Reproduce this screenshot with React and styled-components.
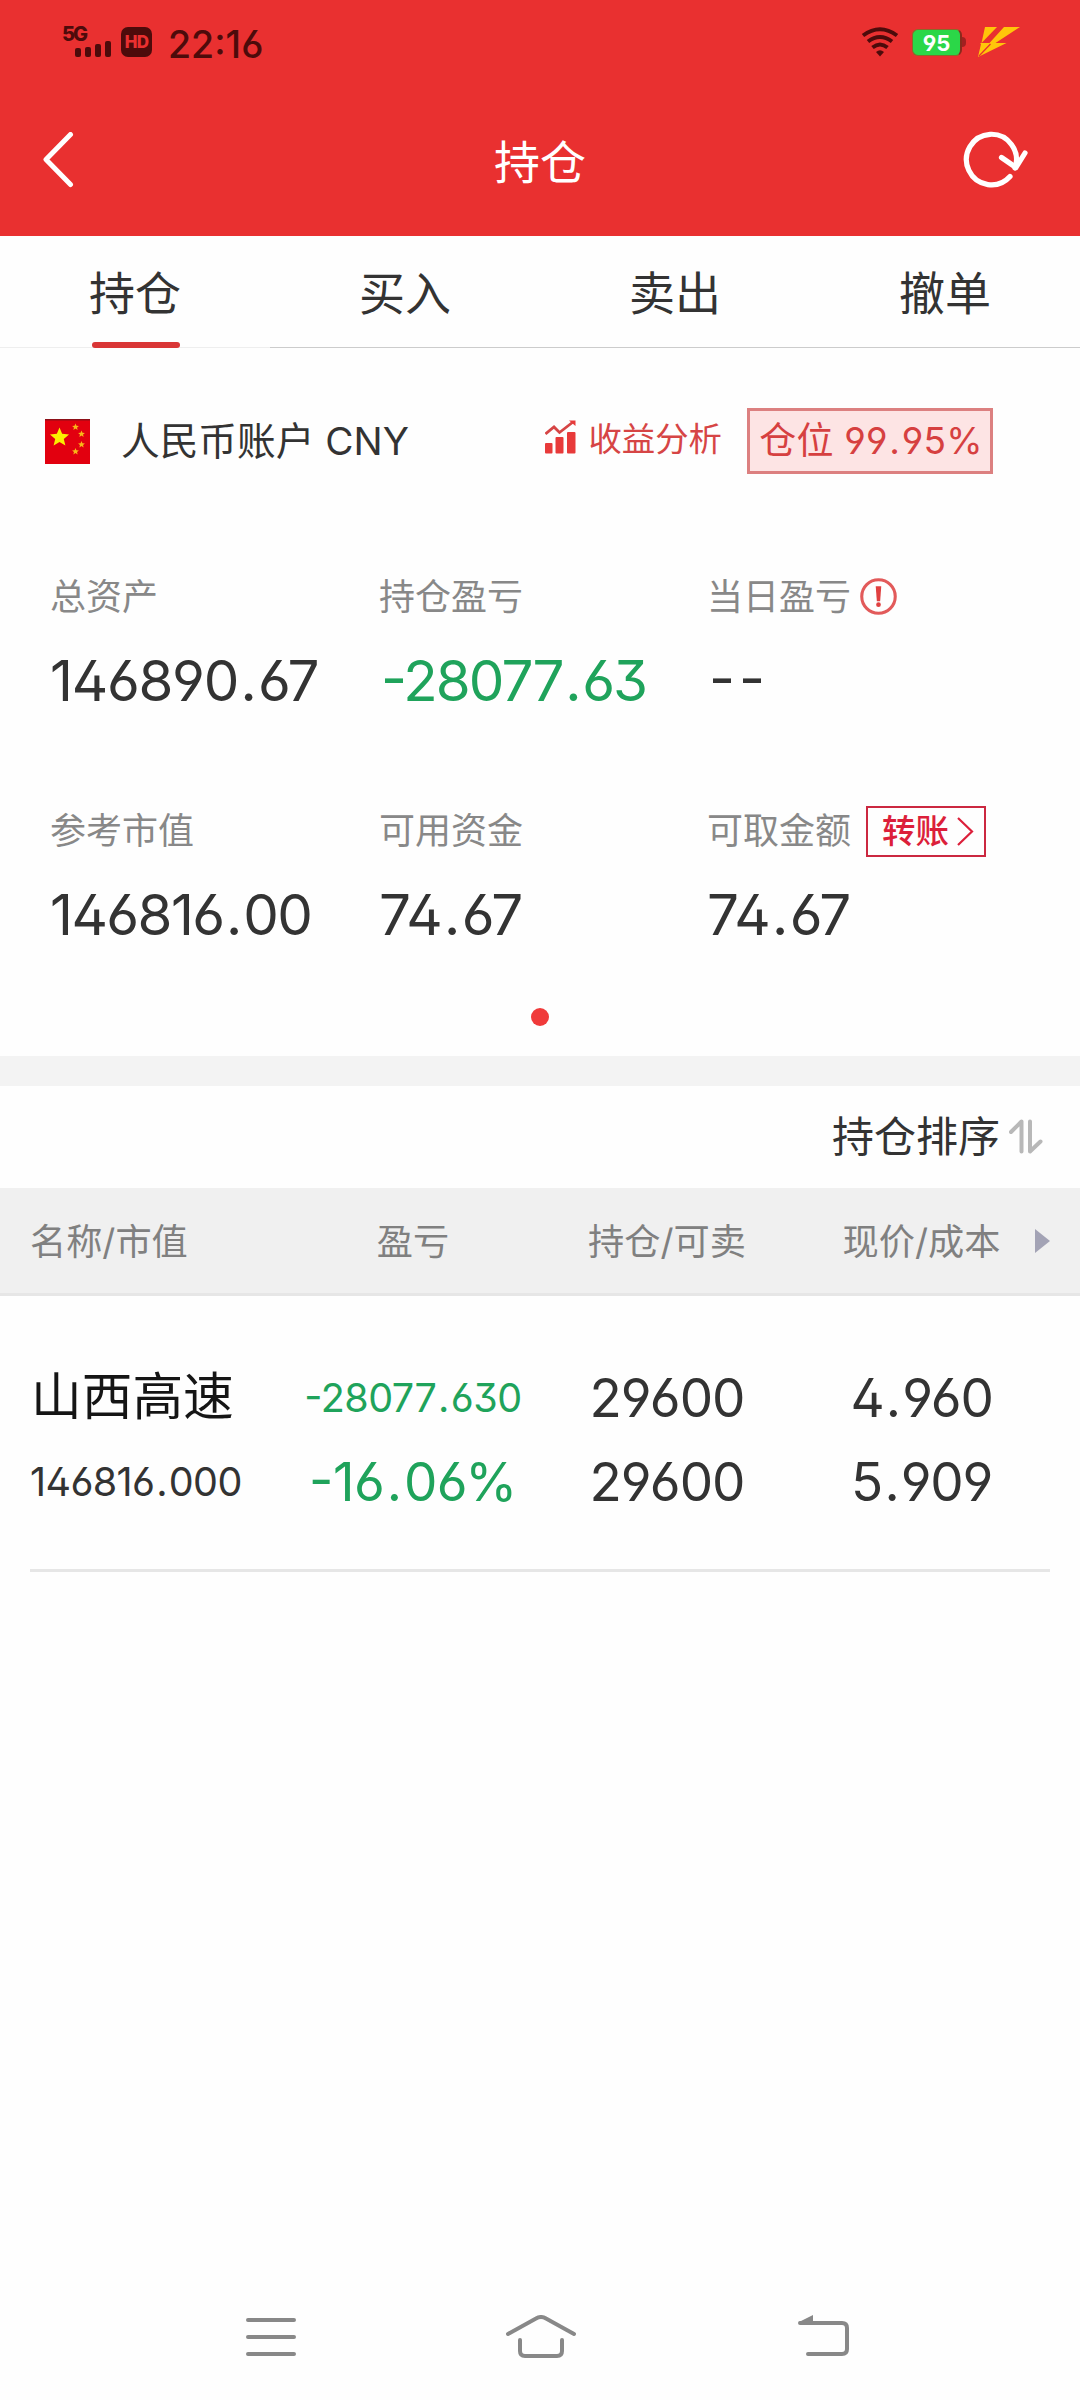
import React from "react";
import styled, { createGlobalStyle } from "styled-components";

const Global = createGlobalStyle`
  * { box-sizing: border-box; }
  body { margin: 0; background: #fefefe; }
`;

const Screen = styled.div`
  width: 1080px;
  height: 2400px;
  display: flex;
  flex-direction: column;
  background: #fefefe;
  color: #333;
  font-family: Inter, "Noto Sans CJK SC", sans-serif;
  font-feature-settings: "case", "ss01";
  white-space: nowrap;
  overflow: hidden;
`;

const TopArea = styled.header`
  height: 236px;
  background: #e93030;
  color: #fff;
`;

const StatusBar = styled.div`
  height: 84px;
  display: flex;
  align-items: center;
  justify-content: space-between;
  padding: 0 60px 0 62px;
  color: #4d0b0b;
`;

const StatusGroup = styled.div`
  display: flex;
  align-items: center;
`;

const Signal = styled.div`
  width: 49px;
  height: 34px;
  display: flex;
  flex-direction: column;
`;

const Network = styled.span`
  height: 15px;
  font-size: 20px;
  line-height: 18px;
  font-weight: 800;
  letter-spacing: -2px;
`;

const Bars = styled.div`
  height: 17px;
  display: flex;
  align-items: flex-end;
  gap: 4px;
  padding-left: 13px;
`;

const Bar = styled.i`
  width: 6px;
  height: ${(p) => p.$h}px;
  border-radius: 2px;
  background: currentColor;
`;

const HdBadge = styled.span`
  width: 31px;
  height: 30px;
  margin-left: 10px;
  border-radius: 7px;
  background: #4d0b0b;
  color: #e93030;
  font-size: 17px;
  line-height: 30px;
  font-weight: 800;
  letter-spacing: -0.8px;
  text-align: center;
`;

const Clock = styled.span`
  margin: 5px 0 0 16px;
  font-size: 37.5px;
  line-height: 40px;
  font-weight: 450;
`;

const Battery = styled.span`
  width: 50px;
  height: 27px;
  margin-left: 13px;
  border: 1px solid #8a6a2a;
  border-right: 2px solid #8a2a1c;
  border-radius: 6px;
  background: #2bd748;
  color: #fff;
  font-size: 22px;
  line-height: 26px;
  font-weight: 700;
  text-align: center;
`;

const BatteryTip = styled.i`
  width: 4px;
  height: 10px;
  margin-right: 12px;
  border-radius: 0 4px 4px 0;
  background: #a22020;
`;

const TitleBar = styled.div`
  height: 152px;
  display: flex;
  align-items: center;
  justify-content: space-between;
  padding: 0 52px 0 42px;
`;

const Title = styled.h1`
  margin: 3px 0 0 44px;
  font-size: 46px;
  line-height: 60px;
  font-weight: 400;
`;

const Tabs = styled.nav`
  height: 112px;
  display: grid;
  grid-template-columns: repeat(4, 1fr);
`;

const Tab = styled.div`
  display: flex;
  flex-direction: column;
  align-items: center;
  justify-content: space-between;
  padding-top: 27px;
  border-bottom: 1px solid ${(p) => (p.$active ? "#eee" : "#ccc")};
  font-size: 46px;
  line-height: 60px;
`;

const TabMark = styled.i`
  width: 88px;
  height: 6px;
  margin: 0 0 -1px 1px;
  border-radius: 3px;
  background: #d93636;
`;

const AccountRow = styled.section`
  height: 186px;
  display: flex;
  align-items: center;
  padding: 0 87px 0 45px;
`;

const AccountName = styled.span`
  margin-left: 31px;
  font-size: 38.7px;
  line-height: 50px;
`;

const Analysis = styled.span`
  height: 46px;
  display: flex;
  align-items: flex-start;
  gap: 12px;
  margin-left: auto;
  padding-top: 2px;
  color: #d64545;
  font-size: 33.4px;
  line-height: 39px;
`;

const Ratio = styled.span`
  width: 246px;
  height: 66px;
  margin-left: 25px;
  padding-left: 2px;
  border: 3px solid #dc8080;
  background: #fde4e4;
  color: #d64040;
  font-size: 37px;
  line-height: 59px;
  text-align: center;
  letter-spacing: 0.2px;
`;

const Summary = styled.section`
  height: 522px;
  display: grid;
  grid-template-columns: 329px 328px 1fr;
  grid-template-rows: 234px 234px;
  padding: 36px 0 0 50px;
`;

const Metric = styled.div`
  display: flex;
  flex-direction: column;
`;

const MetricLabel = styled.div`
  height: 52px;
  display: flex;
  align-items: center;
  color: #888;
  font-size: 36px;
`;

const LabelText = styled.span`
  margin-top: -4px;
`;

const MetricValue = styled.div`
  height: 70px;
  margin-top: 24px;
  margin-left: ${(p) => p.$shift || 0}px;
  color: ${(p) => (p.$loss ? "#1fa35b" : "#333")};
  font-size: 56.5px;
  line-height: 70px;
  font-weight: 385;
  letter-spacing: ${(p) => p.$track}px;
`;

const Point = styled.span`
  margin: 0 0.045em;
`;

const TransferButton = styled.span`
  width: 120px;
  height: 51px;
  display: flex;
  align-items: center;
  gap: 9px;
  margin: 2px 0 0 15px;
  padding-left: 14px;
  border: 2px solid #cb2840;
  color: #dc1f3a;
  font-size: 33.5px;
  line-height: 44px;
  font-weight: 500;

  svg {
    margin-left: -1px;
  }
`;

const Pager = styled.div`
  width: 18px;
  height: 18px;
  margin: -48px auto 30px;
  border-radius: 50%;
  background: #f03a3a;
`;

const Divider = styled.div`
  height: 30px;
  background: #f3f3f3;
`;

const SortRow = styled.div`
  height: 102px;
  display: flex;
  align-items: center;
  justify-content: flex-end;
  gap: 9px;
  padding: 0 37px 7px 0;
  font-size: 42px;

  svg {
    margin-top: 6px;
  }
`;

const Columns = styled.div`
  display: grid;
  grid-template-columns: 285px 256px 252px 257px 1fr;
`;

const HeadRow = styled(Columns)`
  height: 108px;
  align-items: center;
  border-bottom: 3px solid #e6e6e6;
  background: #f0f0f0;
  color: #808080;
  font-size: 36.2px;
  text-align: center;

  svg {
    margin-left: -15px;
  }
`;

const HeadCell = styled.span`
  margin-top: -3px;
  padding-left: ${(p) => p.$pad || 0}px;
  text-align: ${(p) => p.$align || "center"};
`;

const Position = styled(Columns)`
  height: 276px;
  align-content: start;
  grid-template-rows: 84px 84px;
  align-items: center;
  padding-top: 60px;
`;

const Cell = styled.span`
  padding-left: ${(p) => p.$pad || 0}px;
  color: ${(p) => p.$color || "#333"};
  font-size: ${(p) => p.$size}px;
  line-height: 84px;
  font-weight: ${(p) => p.$weight || 385};
  letter-spacing: ${(p) => p.$track || 0}px;
  text-align: ${(p) => p.$align || "center"};
`;

const StockName = styled(Cell)`
  margin-top: -2px;
`;

const RowLine = styled.div`
  height: 3px;
  margin: -3px 30px 0;
  background: #e6e6e6;
`;

const SystemNav = styled.footer`
  height: 126px;
  display: grid;
  grid-template-columns: 1fr 72px 1fr;
  align-items: center;
  margin-top: auto;
  padding: 0 229px 0 244px;

  svg:first-child {
    justify-self: start;
  }
  svg:nth-child(2) {
    margin-left: -7px;
  }
  svg:last-child {
    justify-self: end;
  }
`;

const WifiIcon = () => (
  <svg width="38" height="30" viewBox="0 0 38 30" fill="none" stroke="#4d0b0b" strokeWidth="4">
    <path d="M2 8.500Q19 -4 36 8.500" />
    <path d="M7 14.500Q19 5.500 31 14.500" />
    <path d="M11.500 20.500Q19 14.500 26.500 20.500" />
    <path d="M15 25Q19 21.500 23 25L19 29.500Z" fill="#4d0b0b" stroke="none" />
  </svg>
);

const BoltIcon = () => (
  <svg width="42" height="30" viewBox="0 0 42 30">
    <path d="M7 0H19L3.500 16Z" fill="#ffc60a" />
    <path d="M26 0H42L17.500 16H28.500L0 30L12 17H2.500V16H11.500Z" fill="#ffc60a" />
    <path d="M3 17H12L0 30Z" fill="#ffc60a" />
    <path d="M12.500 17L1 29" stroke="#e93030" strokeWidth="1.200" />
  </svg>
);

const BackIcon = () => (
  <svg width="32" height="56" viewBox="0 0 32 56" fill="none" stroke="#fff" strokeWidth="5" strokeLinecap="round" strokeLinejoin="round">
    <path d="M28.500 2.500L4 27.500L28.500 52.500" />
  </svg>
);

const RefreshIcon = () => (
  <svg width="66" height="58" viewBox="0 0 66 58" fill="none" stroke="#fff" strokeWidth="5.200" strokeLinecap="round" strokeLinejoin="round">
    <path d="M48 45.500A25 25.300 0 1 1 53 37" />
    <path d="M39.500 26.500L54 36.500L63 22" />
  </svg>
);

const starPoints = (cx, cy, r) =>
  Array.from({ length: 10 }, (_, i) => {
    const a = -Math.PI / 2 + (i * Math.PI) / 5;
    const d = i % 2 ? r * 0.45 : r;
    return `${cx + d * Math.cos(a)},${cy + d * Math.sin(a)}`;
  }).join(" ");

const FlagIcon = () => (
  <svg width="45" height="45" viewBox="0 0 45 45">
    <rect width="45" height="45" fill="#e2000f" />
    <rect width="45" height="1.500" fill="#8d1018" />
    <polygon points={starPoints(14.5, 18.5, 10)} fill="#fbf000" />
    <polygon points={starPoints(30.5, 8, 3.6)} fill="#f8b818" />
    <polygon points={starPoints(36.5, 15, 3.6)} fill="#f8b818" />
    <polygon points={starPoints(36.5, 25.5, 3.6)} fill="#f8b818" />
    <polygon points={starPoints(30.5, 32.5, 3.6)} fill="#f8b818" />
  </svg>
);

const TrendIcon = () => (
  <svg width="31" height="34" viewBox="0 0 31 34" fill="#e83a3a">
    <rect x="0" y="23" width="7.500" height="10.500" rx="1" />
    <rect x="10.500" y="17" width="8" height="16.500" rx="1" />
    <rect x="22" y="12" width="8.500" height="21.500" rx="1" />
    <path d="M0.500 14L9 7L14.500 12.500L28 2" fill="none" stroke="#d64545" strokeWidth="2.800" />
    <path d="M24 0.500H30.500V6Z" />
  </svg>
);

const AlertBox = styled.span`
  display: flex;
  margin-left: 9px;
`;

const AlertMark = () => (
  <AlertBox>
    <svg width="37" height="37" viewBox="0 0 36 36">
      <circle cx="18" cy="18" r="16.300" fill="none" stroke="#e25a5a" strokeWidth="3" />
      <path d="M15.300 8H20.700L19.600 22.500H16.400Z" fill="#e04040" />
      <circle cx="18" cy="26" r="2.300" fill="#e04040" />
    </svg>
  </AlertBox>
);

const ArrowIcon = () => (
  <svg width="17" height="29" viewBox="0 0 17 29" fill="none" stroke="#dc1f3a" strokeWidth="2.200">
    <path d="M1 1L15 14.500L1 28" />
  </svg>
);

const SortIcon = () => (
  <svg width="34" height="35" viewBox="0 0 34 35" fill="none" stroke="#b8b8b8" strokeWidth="4" strokeLinecap="round" strokeLinejoin="round">
    <path d="M2 13L12.500 2.500V32.500" />
    <path d="M21 2.500V32.500L31.500 22.500" />
  </svg>
);

const MoreIcon = () => (
  <svg width="15" height="24" viewBox="0 0 15 24" fill="#a3a3b5">
    <path d="M0 0L15 12L0 24Z" />
  </svg>
);

const MenuIcon = () => (
  <svg width="52" height="44" viewBox="0 0 52 44" fill="none" stroke="#888" strokeWidth="4" strokeLinecap="round">
    <path d="M4 5H50M4 22H50M4 39H50" />
  </svg>
);

const HomeIcon = () => (
  <svg width="72" height="44" viewBox="0 0 72 44" fill="none" stroke="#888" strokeWidth="4" strokeLinecap="round" strokeLinejoin="round">
    <path d="M3 19L31 3.500Q36 0.500 41 3.500L69 19" />
    <path d="M15 25V36Q15 41 20 41H52Q57 41 57 36V25" />
  </svg>
);

const ReturnIcon = () => (
  <svg width="54" height="44" viewBox="0 0 54 44" fill="none" stroke="#888" strokeWidth="4" strokeLinecap="round">
    <path d="M3 8H45Q50 8 50 13V34Q50 39 45 39H11" />
    <path d="M2 7L16 0V8H2Z" fill="#888" stroke="none" />
  </svg>
);

const Amount = ({ text }) => {
  const [whole, fraction] = text.split(".");
  return (
    <>
      {whole}
      {fraction && <Point>.</Point>}
      {fraction}
    </>
  );
};

const metrics = [
  { label: "总资产", value: "146890.67", track: -1.3 },
  { label: "持仓盈亏", value: "-28077.63", track: -1.9, loss: true, shift: 2 },
  { label: "当日盈亏", value: "--", track: 4, shift: 2, extra: <AlertMark /> },
  { label: "参考市值", value: "146816.00", track: -1.6 },
  { label: "可用资金", value: "74.67", track: -1.2 },
  {
    label: "可取金额",
    value: "74.67",
    track: -1.2,
    extra: (
      <TransferButton>
        转账
        <ArrowIcon />
      </TransferButton>
    ),
  },
];

const green = "#1fa35b";

export default function App() {
  return (
    <Screen>
      <Global />
      <TopArea>
        <StatusBar>
          <StatusGroup>
            <Signal>
              <Network>5G</Network>
              <Bars>
                {[9, 10, 13, 16].map((h) => (
                  <Bar key={h} $h={h} />
                ))}
              </Bars>
            </Signal>
            <HdBadge>HD</HdBadge>
            <Clock>22:16</Clock>
          </StatusGroup>
          <StatusGroup>
            <WifiIcon />
            <Battery>95</Battery>
            <BatteryTip />
            <BoltIcon />
          </StatusGroup>
        </StatusBar>
        <TitleBar>
          <BackIcon />
          <Title>持仓</Title>
          <RefreshIcon />
        </TitleBar>
      </TopArea>
      <Tabs>
        {["持仓", "买入", "卖出", "撤单"].map((name, i) => (
          <Tab key={name} $active={i === 0}>
            {name}
            {i === 0 && <TabMark />}
          </Tab>
        ))}
      </Tabs>
      <AccountRow>
        <FlagIcon />
        <AccountName>人民币账户 CNY</AccountName>
        <Analysis>
          <TrendIcon />
          收益分析
        </Analysis>
        <Ratio>
          仓位 <Amount text="99.95%" />
        </Ratio>
      </AccountRow>
      <Summary>
        {metrics.map((m) => (
          <Metric key={m.label}>
            <MetricLabel>
              <LabelText>{m.label}</LabelText>
              {m.extra}
            </MetricLabel>
            <MetricValue $track={m.track} $loss={m.loss} $shift={m.shift}>
              <Amount text={m.value} />
            </MetricValue>
          </Metric>
        ))}
      </Summary>
      <Pager />
      <Divider />
      <SortRow>
        持仓排序
        <SortIcon />
      </SortRow>
      <HeadRow>
        <HeadCell $align="left" $pad={30}>名称/市值</HeadCell>
        <HeadCell>盈亏</HeadCell>
        <HeadCell>持仓/可卖</HeadCell>
        <HeadCell>现价/成本</HeadCell>
        <MoreIcon />
      </HeadRow>
      <Position>
        <StockName $align="left" $pad={31} $size={50.7} $weight={400} $color="#151515">山西高速</StockName>
        <Cell $size={39.5} $track={-0.5} $color={green}><Amount text="-28077.630" /></Cell>
        <Cell $size={53} $track={-1}>29600</Cell>
        <Cell $size={53} $track={-1.3}><Amount text="4.960" /></Cell>
        <span />
        <Cell $align="left" $pad={30} $size={39.5} $track={-0.6}><Amount text="146816.000" /></Cell>
        <Cell $size={53} $track={-0.5} $color={green}><Amount text="-16.06%" /></Cell>
        <Cell $size={53} $track={-1}>29600</Cell>
        <Cell $size={53} $track={-1.3}><Amount text="5.909" /></Cell>
      </Position>
      <RowLine />
      <SystemNav>
        <MenuIcon />
        <HomeIcon />
        <ReturnIcon />
      </SystemNav>
    </Screen>
  );
}
